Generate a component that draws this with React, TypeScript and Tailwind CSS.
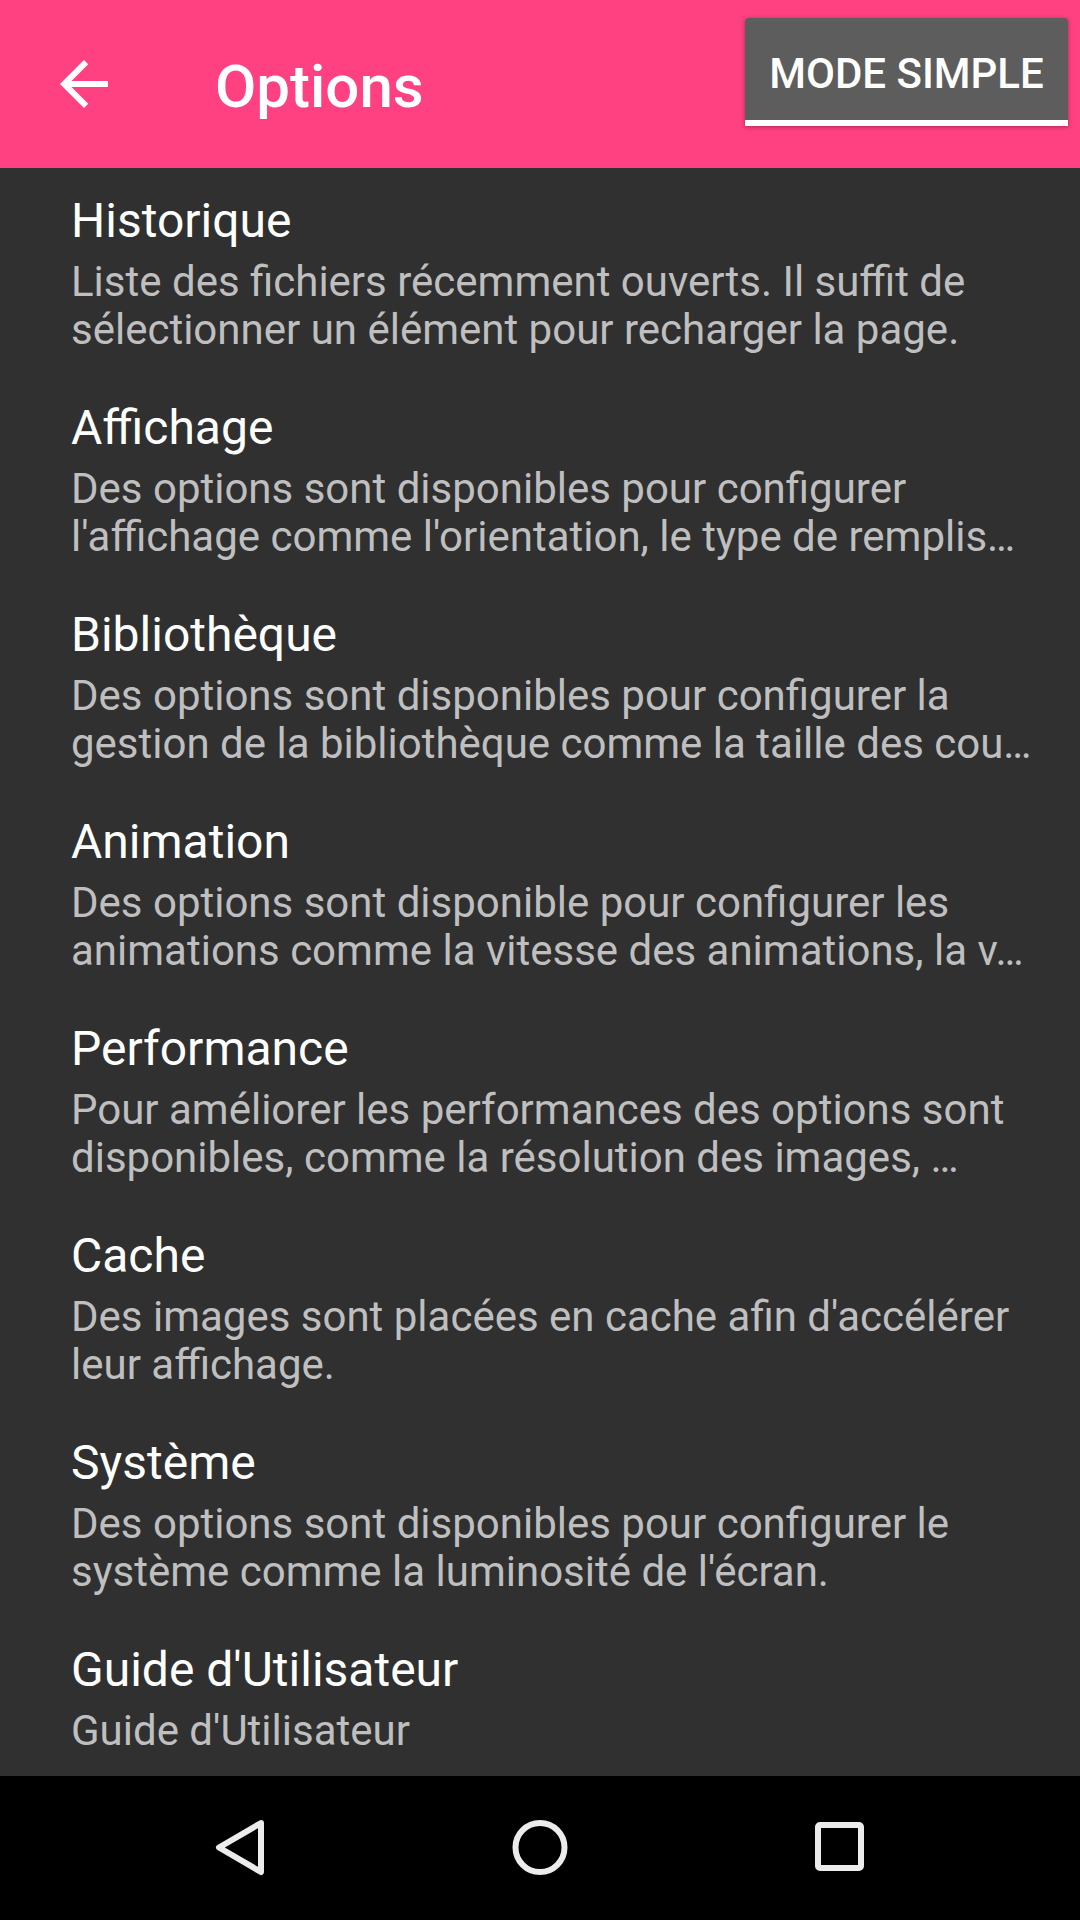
import React from "react";

type Item = { title: string; lines: string[] };

const items: Item[] = [
  {
    title: "Historique",
    lines: [
      "Liste des fichiers récemment ouverts. Il suffit de",
      "sélectionner un élément pour recharger la page.",
    ],
  },
  {
    title: "Affichage",
    lines: [
      "Des options sont disponibles pour configurer",
      "l'affichage comme l'orientation, le type de remplis…",
    ],
  },
  {
    title: "Bibliothèque",
    lines: [
      "Des options sont disponibles pour configurer la",
      "gestion de la bibliothèque comme la taille des cou…",
    ],
  },
  {
    title: "Animation",
    lines: [
      "Des options sont disponible pour configurer les",
      "animations comme la vitesse des animations, la v…",
    ],
  },
  {
    title: "Performance",
    lines: [
      "Pour améliorer les performances des options sont",
      "disponibles, comme la résolution des images, …",
    ],
  },
  {
    title: "Cache",
    lines: [
      "Des images sont placées en cache afin d'accélérer",
      "leur affichage.",
    ],
  },
  {
    title: "Système",
    lines: [
      "Des options sont disponibles pour configurer le",
      "système comme la luminosité de l'écran.",
    ],
  },
  {
    title: "Guide d'Utilisateur",
    lines: ["Guide d'Utilisateur"],
  },
];

export default function App() {
  return (
    <div className="w-[1080px] h-[1920px] flex flex-col bg-[#303030] font-['Roboto',sans-serif] overflow-hidden">
      {/* Toolbar */}
      <div className="h-[168px] shrink-0 bg-[#ff4081] flex items-start">
        <div className="h-[168px] flex items-center">
          <svg
            className="ml-[48px] w-[72px] h-[72px]"
            viewBox="0 0 24 24"
            fill="#ffffff"
          >
            <path d="M20 11H7.83l5.59-5.59L12 4l-8 8 8 8 1.41-1.41L7.83 13H20v-2z" />
          </svg>
          <div className="ml-[95px] mt-[6px] text-[60px] leading-[70px] font-medium text-white">
            Options
          </div>
        </div>
        <div className="ml-auto mr-[12px] mt-[18px] w-[323px] bg-[#5d5d5d] rounded-t-[4px] border-b-[6px] border-white pt-[31px] pb-[22px] flex justify-center shadow-[0_1px_4px_rgba(0,0,0,0.35)]">
          <span className="text-[42px] leading-[49px] font-medium text-white">
            MODE SIMPLE
          </span>
        </div>
      </div>

      {/* List */}
      <div className="flex-1 min-h-0 overflow-hidden">
        {items.map((it) => (
          <div key={it.title} className="pl-[71px] pr-[42px] pt-[25px] pb-[21px]">
            <div className="text-[48px] leading-[56px] text-white whitespace-nowrap">
              {it.title}
            </div>
            <div className="mt-[9px] text-[42px] leading-[48px] text-[#bfbfbf]">
              {it.lines.map((l, i) => (
                <div key={i} className="whitespace-nowrap">
                  {l}
                </div>
              ))}
            </div>
          </div>
        ))}
      </div>

      {/* Navigation bar */}
      <div className="h-[144px] shrink-0 bg-black flex items-center pl-[210px] gap-[240px]">
        <svg className="w-[60px] h-[60px]" viewBox="0 0 60 60" fill="none">
          <path
            d="M51 5 L9 29.5 L51 54 Z"
            stroke="#ececec"
            strokeWidth="6"
            strokeLinejoin="round"
          />
        </svg>
        <svg className="w-[60px] h-[60px]" viewBox="0 0 60 60" fill="none">
          <circle cx="30" cy="29.5" r="24.5" stroke="#ececec" strokeWidth="6" />
        </svg>
        <svg className="w-[60px] h-[60px]" viewBox="0 0 60 60" fill="none">
          <rect
            x="8"
            y="7"
            width="43"
            height="43"
            rx="2"
            stroke="#ececec"
            strokeWidth="6"
            strokeLinejoin="round"
          />
        </svg>
      </div>
    </div>
  );
}
